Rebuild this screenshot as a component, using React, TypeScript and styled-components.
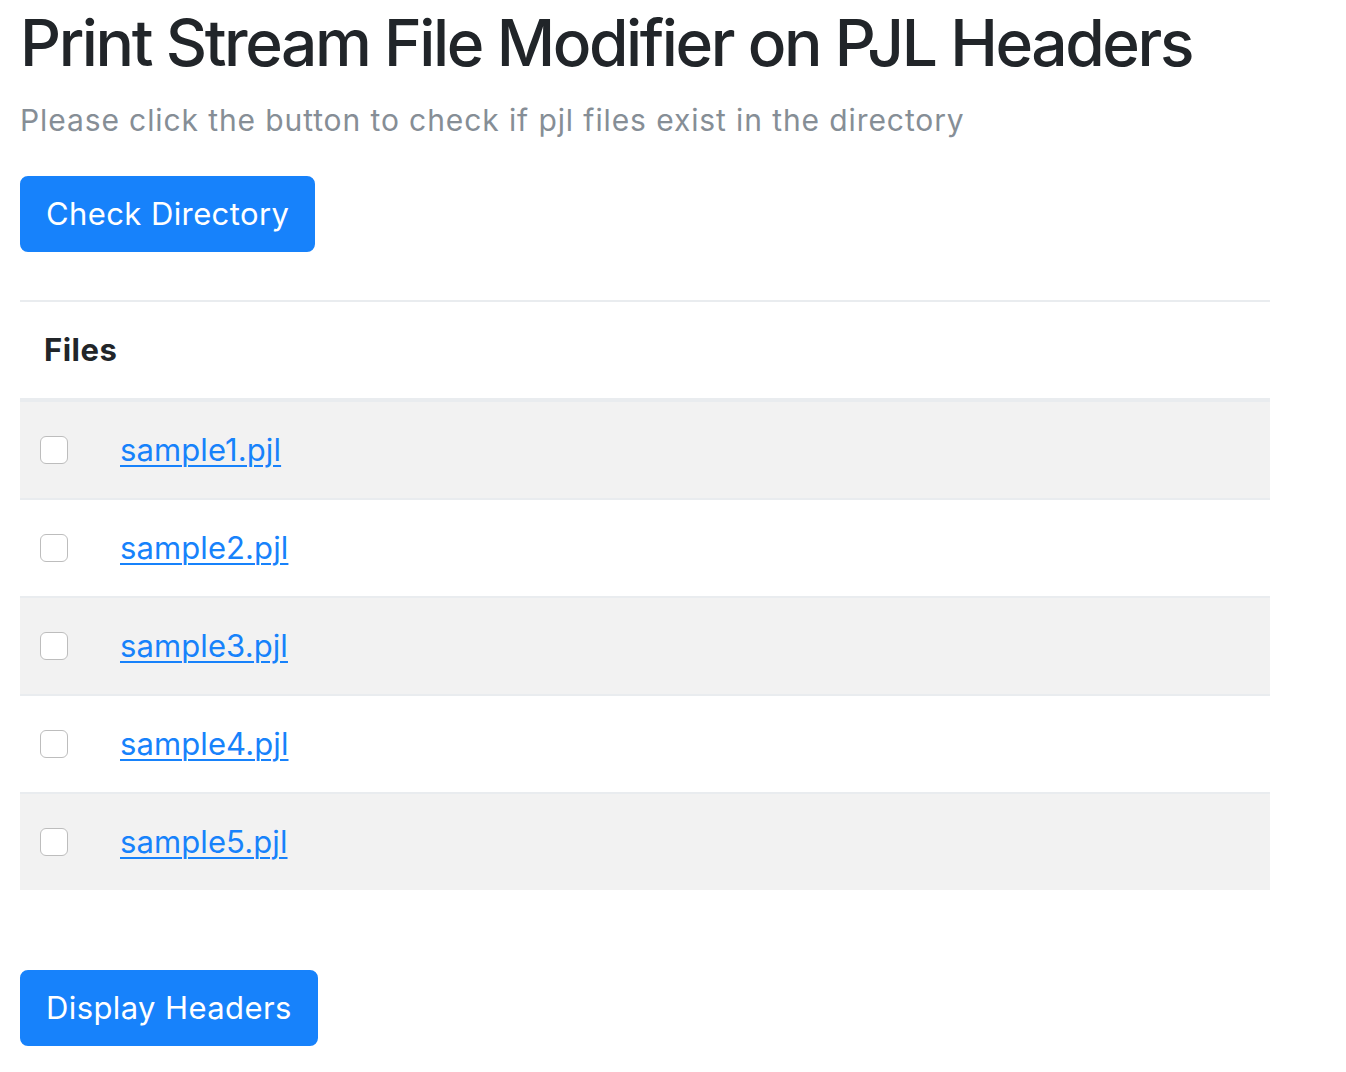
import React from "react";
import styled, { createGlobalStyle } from "styled-components";

const Global = createGlobalStyle`
  html, body { margin: 0; padding: 0; background: #fff; }
  body { font-family: Inter, "Noto Sans", "Liberation Sans", sans-serif; color: #212529; }
`;

const Page = styled.div`
  padding: 5px 20px 20px 20px;
  width: 1250px;
`;

const Title = styled.h1`
  font-size: 64px;
  font-weight: 500;
  line-height: 1.2;
  margin: 0 0 16px 0;
  color: #212529;
  letter-spacing: -2.4px;
`;

const Subtitle = styled.p`
  font-size: 30px;
  line-height: 45px;
  margin: 0 0 33px 0;
  color: #868e96;
  letter-spacing: 0.9px;
`;

const Button = styled.button<{ $top?: number }>`
  display: inline-block;
  margin-top: ${(p) => p.$top ?? 0}px;
  padding: 12px 24px 12px 24px;
  font-family: inherit;
  font-size: 31px;
  line-height: 48px;
  letter-spacing: 0.4px;
  color: #fff;
  background: #1782fb;
  border: 2px solid #1782fb;
  border-radius: 8px;
  cursor: pointer;
`;

const Table = styled.table`
  width: 1250px;
  margin-top: 48px;
  border-collapse: collapse;
  font-size: 31px;
  line-height: 48px;
`;

const HeadCell = styled.th`
  text-align: left;
  font-weight: 700;
  padding: 24px 24px;
  letter-spacing: 0.5px;
  border-top: 2px solid #e9ecef;
  border-bottom: 4px solid #e9ecef;
  color: #212529;
`;

const Row = styled.tr<{ $striped: boolean }>`
  background: ${(p) => (p.$striped ? "#f2f2f2" : "#fff")};
`;

const CheckCell = styled.td`
  width: 28px;
  padding: 24px 28px 24px 20px;
  border-top: 2px solid #e9ecef;
  vertical-align: middle;
`;

const LinkCell = styled.td`
  width: 100%;
  padding: 24px 24px;
  border-top: 2px solid #e9ecef;
  font-size: 31px;
  letter-spacing: 0.1px;
`;

const Check = styled.span`
  display: block;
  width: 28px;
  height: 28px;
  box-sizing: border-box;
  border: 1.5px solid #bdbdbd;
  border-radius: 6px;
  background: #fff;
`;

const FileLink = styled.a`
  color: #1782fb;
  text-decoration: underline;
  text-underline-offset: 4px;
  text-decoration-thickness: 2px;
`;

const files = ["sample1.pjl", "sample2.pjl", "sample3.pjl", "sample4.pjl", "sample5.pjl"];

export default function App() {
  return (
    <>
      <Global />
      <Page>
        <Title>Print Stream File Modifier on PJL Headers</Title>
        <Subtitle>Please click the button to check if pjl files exist in the directory</Subtitle>
        <Button>Check Directory</Button>
        <Table>
          <thead>
            <tr>
              <HeadCell colSpan={2}>Files</HeadCell>
            </tr>
          </thead>
          <tbody>
            {files.map((f, i) => (
              <Row key={f} $striped={i % 2 === 0}>
                <CheckCell>
                  <Check />
                </CheckCell>
                <LinkCell>
                  <FileLink href="#">{f}</FileLink>
                </LinkCell>
              </Row>
            ))}
          </tbody>
        </Table>
        <Button $top={80}>Display Headers</Button>
      </Page>
    </>
  );
}
